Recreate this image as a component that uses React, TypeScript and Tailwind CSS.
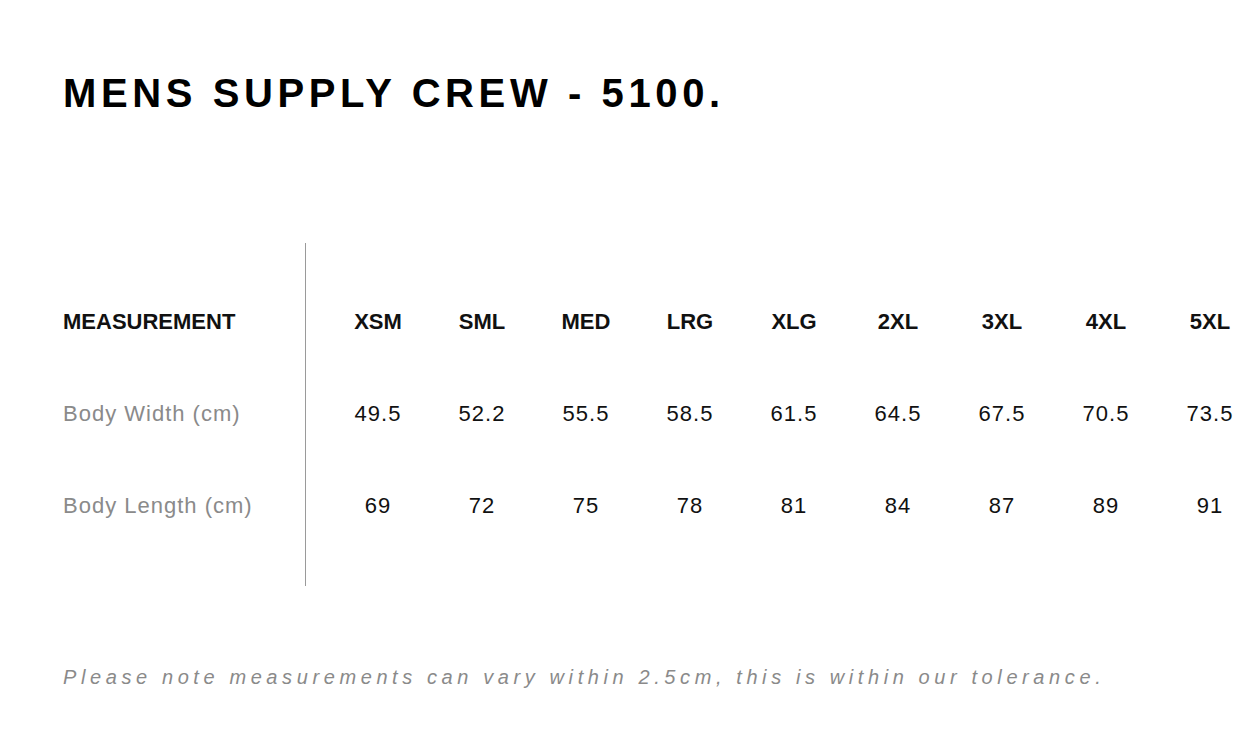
import React from 'react';

const sizes = ['XSM', 'SML', 'MED', 'LRG', 'XLG', '2XL', '3XL', '4XL', '5XL'];

const rows = [
    { label: 'Body Width (cm)', values: ['49.5', '52.2', '55.5', '58.5', '61.5', '64.5', '67.5', '70.5', '73.5'] },
    { label: 'Body Length (cm)', values: ['69', '72', '75', '78', '81', '84', '87', '89', '91'] },
];

export default function App() {
    return (
        <div className="w-[1254px] h-[742px] overflow-hidden bg-white font-['Liberation_Sans',Arial,sans-serif] pl-[63px]">
            {/* Title */}
            <h1 className="pt-[73px] text-[40px] leading-none font-bold tracking-[4.6px] text-black whitespace-nowrap">
                MENS SUPPLY CREW - 5100.
            </h1>

            {/* Size table */}
            <div className="mt-[130px] flex h-[343px]">
                {/* Labels */}
                <div className="w-[242px] shrink-0 pt-[32px] flex flex-col">
                    <div className="h-[92px] flex items-center text-[22px] font-bold text-[#111]">MEASUREMENT</div>
                    {rows.map((row) => (
                        <div key={row.label} className="h-[92px] flex items-center text-[22px] tracking-[1px] text-[#8a8a8a] whitespace-nowrap">
                            {row.label}
                        </div>
                    ))}
                </div>

                {/* Divider */}
                <div className="w-px shrink-0 bg-[#9a9a9a]" />

                {/* Values */}
                <div className="pl-[20px] pt-[32px] shrink-0 flex flex-col">
                    <div className="h-[92px] grid grid-cols-[repeat(9,104px)] items-center">
                        {sizes.map((s) => (
                            <div key={s} className="text-center text-[22px] font-bold text-[#111]">{s}</div>
                        ))}
                    </div>
                    {rows.map((row) => (
                        <div key={row.label} className="h-[92px] grid grid-cols-[repeat(9,104px)] items-center">
                            {row.values.map((v, i) => (
                                <div key={i} className="text-center text-[22px] tracking-[1px] text-[#111]">{v}</div>
                            ))}
                        </div>
                    ))}
                </div>
            </div>

            {/* Footnote */}
            <p className="mt-[81px] text-[20px] leading-none italic tracking-[4.6px] text-[#8a8a8a] whitespace-nowrap">
                Please note measurements can vary within 2.5cm, this is within our tolerance.
            </p>
        </div>
    );
}
